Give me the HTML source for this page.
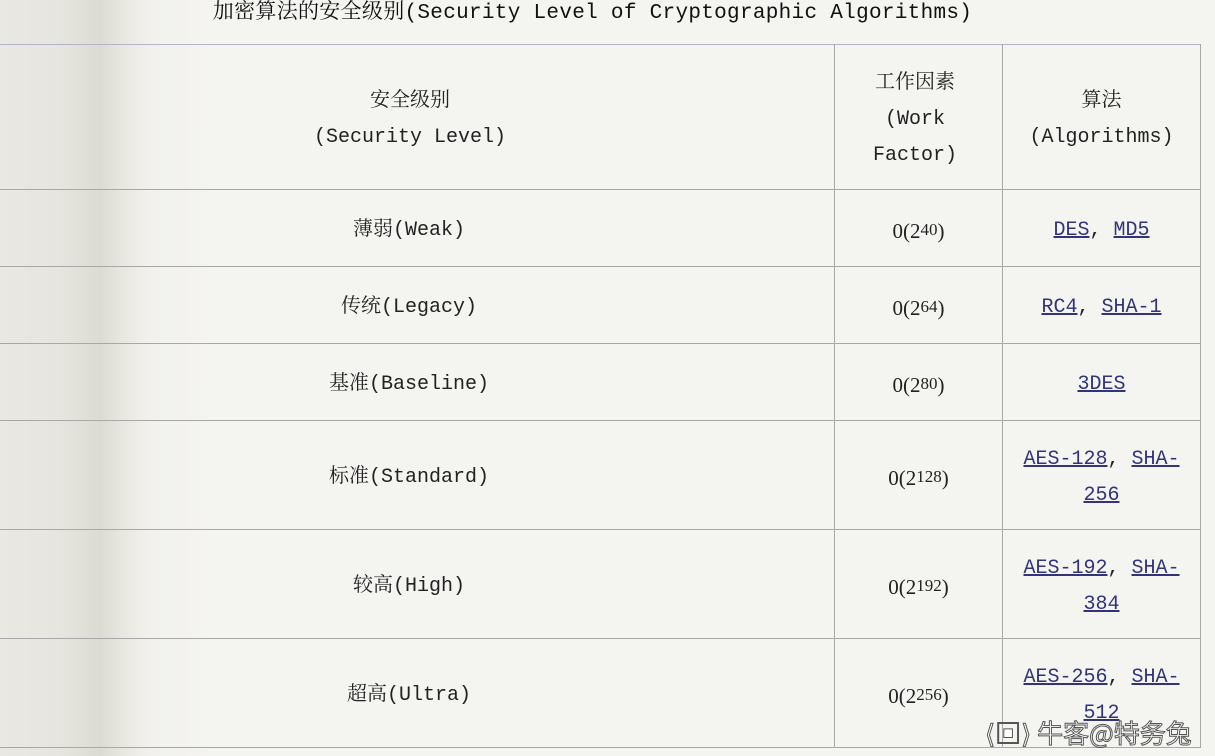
<!DOCTYPE html>
<html><head><meta charset="utf-8"><style>
body{margin:0;width:1215px;height:756px;overflow:hidden;background:linear-gradient(90deg,#e9e8e2 0px,#e6e5df 60px,#dcdbd3 100px,#e9e8e2 125px,#f2f1ed 150px,#f4f4f1 220px,#f4f4f1 100%);font-family:"Liberation Mono","Noto Serif CJK SC",monospace;color:#222;font-size:20px;position:relative}
.t{position:absolute;top:0;left:0;width:1185px;text-align:center;line-height:28px;font-size:21px;color:#111;letter-spacing:0.3px}
.c{position:absolute;display:flex;align-items:center;justify-content:center;text-align:center;line-height:36px;box-sizing:border-box;padding-top:6px}
.h{position:absolute;background:#a8a8a8}
a{color:#33337a;text-decoration:underline}
sup{font-size:17px;line-height:0;position:relative;top:-1px;vertical-align:super}
.n{font-family:"Liberation Serif","Noto Serif CJK SC",serif;font-size:21px}
</style></head><body>
<div class="t">加密算法的安全级别(Security Level of Cryptographic Algorithms)</div>
<div class="h" style="left:0;top:44px;width:1201px;height:1px;background:#b4b4c8"></div>
<div class="h" style="left:0;top:189px;width:1201px;height:1px"></div>
<div class="h" style="left:0;top:266px;width:1201px;height:1px"></div>
<div class="h" style="left:0;top:343px;width:1201px;height:1px"></div>
<div class="h" style="left:0;top:420px;width:1201px;height:1px"></div>
<div class="h" style="left:0;top:529px;width:1201px;height:1px"></div>
<div class="h" style="left:0;top:638px;width:1201px;height:1px"></div>
<div class="h" style="left:0;top:747px;width:1201px;height:1px"></div>
<div class="h" style="left:834px;top:44px;width:1px;height:704px"></div>
<div class="h" style="left:1002px;top:44px;width:1px;height:704px"></div>
<div class="h" style="left:1200px;top:44px;width:1px;height:704px"></div>

<div class="c" style="left:0;top:45px;width:820px;height:144px">安全级别<br>(Security Level)</div>
<div class="c" style="left:835px;top:45px;width:160px;height:144px">工作因素<br>(Work<br>Factor)</div>
<div class="c" style="left:1003px;top:45px;width:197px;height:144px">算法<br>(Algorithms)</div>

<div class="c" style="left:0;top:190px;width:818px;height:76px">薄弱(Weak)</div>
<div class="c n" style="left:835px;top:190px;width:167px;height:76px">0(2<sup>40</sup>)</div>
<div class="c" style="left:1003px;top:190px;width:197px;height:76px"><span><a>DES</a>, <a>MD5</a></span></div>

<div class="c" style="left:0;top:267px;width:818px;height:76px">传统(Legacy)</div>
<div class="c n" style="left:835px;top:267px;width:167px;height:76px">0(2<sup>64</sup>)</div>
<div class="c" style="left:1003px;top:267px;width:197px;height:76px"><span><a>RC4</a>, <a>SHA-1</a></span></div>

<div class="c" style="left:0;top:344px;width:818px;height:76px">基准(Baseline)</div>
<div class="c n" style="left:835px;top:344px;width:167px;height:76px">0(2<sup>80</sup>)</div>
<div class="c" style="left:1003px;top:344px;width:197px;height:76px"><a>3DES</a></div>

<div class="c" style="left:0;top:421px;width:818px;height:108px">标准(Standard)</div>
<div class="c n" style="left:835px;top:421px;width:167px;height:108px">0(2<sup>128</sup>)</div>
<div class="c" style="left:1003px;top:421px;width:197px;height:108px"><span><a>AES-128</a>, <a>SHA-</a><br><a>256</a></span></div>

<div class="c" style="left:0;top:530px;width:818px;height:108px">较高(High)</div>
<div class="c n" style="left:835px;top:530px;width:167px;height:108px">0(2<sup>192</sup>)</div>
<div class="c" style="left:1003px;top:530px;width:197px;height:108px"><span><a>AES-192</a>, <a>SHA-</a><br><a>384</a></span></div>

<div class="c" style="left:0;top:639px;width:818px;height:108px">超高(Ultra)</div>
<div class="c n" style="left:835px;top:639px;width:167px;height:108px">0(2<sup>256</sup>)</div>
<div class="c" style="left:1003px;top:639px;width:197px;height:108px"><span><a>AES-256</a>, <a>SHA-</a><br><a>512</a></span></div>

<div style="position:absolute;left:985px;top:717px;font-family:'Noto Sans CJK SC',sans-serif;font-size:26px;color:#fff;-webkit-text-stroke:1px #555;line-height:32px;white-space:nowrap">⟨▣⟩ 牛客@特务兔</div>
</body></html>
